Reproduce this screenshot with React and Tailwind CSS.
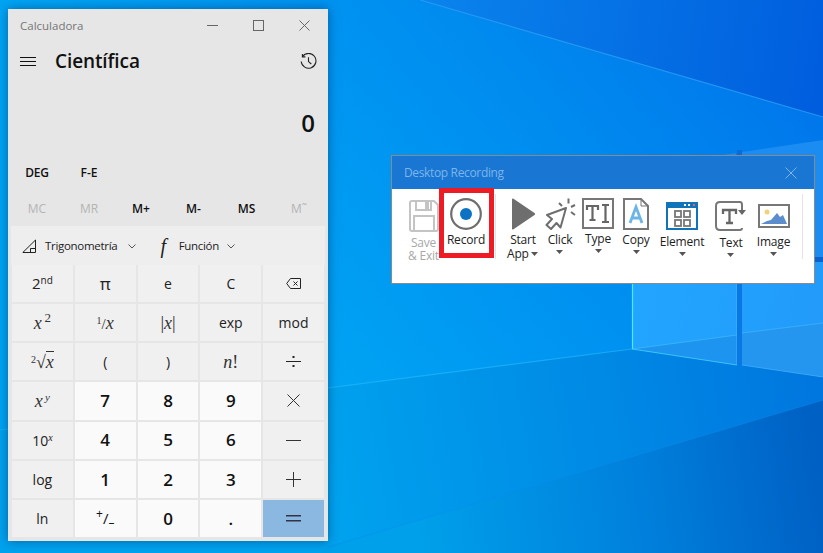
const sans = { fontFamily: '"Open Sans","Noto Sans",sans-serif' };

function Wallpaper() {
  return (
    <svg className="absolute inset-0" width="823" height="553" viewBox="0 0 823 553">
      <defs>
        <linearGradient id="wall" gradientUnits="userSpaceOnUse" x1="330" y1="400" x2="823" y2="0">
          <stop offset="0" stopColor="#00a4f4" />
          <stop offset="0.45" stopColor="#0090f0" />
          <stop offset="1" stopColor="#0070ea" />
        </linearGradient>
        <linearGradient id="top" gradientUnits="userSpaceOnUse" x1="420" y1="0" x2="823" y2="60">
          <stop offset="0" stopColor="#0a84ec" />
          <stop offset="1" stopColor="#005ede" />
        </linearGradient>
        <linearGradient id="floor" gradientUnits="userSpaceOnUse" x1="328" y1="470" x2="823" y2="380">
          <stop offset="0" stopColor="#00a2ee" />
          <stop offset="1" stopColor="#0076de" />
        </linearGradient>
        <linearGradient id="wedge" gradientUnits="userSpaceOnUse" x1="420" y1="553" x2="823" y2="500">
          <stop offset="0" stopColor="#00a0ea" />
          <stop offset="0.55" stopColor="#0080dc" />
          <stop offset="1" stopColor="#0060c4" />
        </linearGradient>
        <linearGradient id="pane" gradientUnits="userSpaceOnUse" x1="632" y1="284" x2="823" y2="340">
          <stop offset="0" stopColor="#22a6ff" />
          <stop offset="1" stopColor="#229afa" />
        </linearGradient>
      </defs>
      <rect width="823" height="553" fill="url(#wall)" />
      <polygon points="420,0 823,117 823,0" fill="url(#top)" />
      <polygon points="0,430 632,349 823,377 823,553 0,553" fill="url(#floor)" />
      <polygon points="320,553 328,547 823,400 823,553" fill="url(#wedge)" />
      <line x1="328" y1="547" x2="823" y2="400" stroke="#0a8cf0" strokeWidth="1" opacity="0.5" />
      <line x1="420" y1="0" x2="823" y2="117" stroke="#2c9ef6" strokeWidth="1.2" opacity="0.8" />
      <line x1="0" y1="430" x2="632" y2="349" stroke="#22b6fc" strokeWidth="1.2" opacity="0.7" />
      <polygon points="632,284 737,284 737,335 632,349" fill="url(#pane)" />
      <polygon points="632,349 737,335 737,365" fill="#1c94f0" />
      <polygon points="742,284 823,284 823,323 742,333" fill="url(#pane)" />
      <polygon points="742,333 823,323 823,377 742,365" fill="#2496f0" />
      <polygon points="723,155 736,153 736,155" fill="#1c8cf0" />
      <rect x="737" y="150" width="5" height="5" fill="#0a6cdc" />
      <polygon points="742,152 823,140 823,257 742,257" fill="#1a8cf2" />
      <rect x="815" y="257" width="8" height="5" fill="#0a62cc" />
      <rect x="815" y="262" width="8" height="22" fill="#229cfa" />
      <rect x="737" y="284" width="5" height="81" fill="#0a78e4" />
      <line x1="632.5" y1="284" x2="632.5" y2="349" stroke="#52e8ff" strokeWidth="1.2" />
      <line x1="632" y1="349" x2="737" y2="365" stroke="#45d4ff" strokeWidth="1" opacity="0.8" />
      <line x1="632" y1="349" x2="737" y2="335" stroke="#50ccff" strokeWidth="1" opacity="0.55" />
      <line x1="736.5" y1="284" x2="736.5" y2="365" stroke="#50c4ff" strokeWidth="1" opacity="0.35" />
      <line x1="742" y1="365" x2="823" y2="377" stroke="#45b4ff" strokeWidth="1" opacity="0.7" />
      <line x1="742" y1="333" x2="823" y2="323" stroke="#50c4ff" strokeWidth="1" opacity="0.55" />
    </svg>
  );
}

function Sup({ children }) {
  return <sup className="text-[10px] leading-none">{children}</sup>;
}

const mathStyle = { fontFamily: '"Liberation Serif",serif' };

function Math({ children }) {
  return <span className="italic text-[18px] leading-none text-[#333]" style={mathStyle}>{children}</span>;
}

const fn = "text-[14px]";
const num = "text-[17px] font-semibold";

const keys = [
  [<span className="text-[15px]">2<Sup>nd</Sup></span>, "f"],
  [<span className="text-[17px]">π</span>, "f"],
  [<span className={fn}>e</span>, "f"],
  [<span className={fn}>C</span>, "f"],
  [<svg width="15" height="11" viewBox="0 0 15 11" fill="none" stroke="#222" strokeWidth="1"><path d="M4.500.5H14.500V10.500H4.500L.7 5.500Z" /><path d="M7.500 3.500l4 4M11.500 3.500l-4 4" /></svg>, "f"],
  [<Math>x<sup className="not-italic text-[13px] leading-none">&thinsp;2</sup></Math>, "f"],
  [<Math><sup className="not-italic text-[10px] leading-none">1</sup><span className="not-italic text-[15px]">/</span>x</Math>, "f"],
  [<Math><span className="not-italic">|</span>x<span className="not-italic">|</span></Math>, "f"],
  [<span className={fn}>exp</span>, "f"],
  [<span className={fn}>mod</span>, "f"],
  [<Math><sup className="text-[10px] not-italic leading-none">2</sup><span className="not-italic">√</span><span className="border-t border-[#333]">x</span></Math>, "f"],
  [<span className={fn}>(</span>, "f"],
  [<span className={fn}>)</span>, "f"],
  [<Math>n<span className="not-italic">!</span></Math>, "f"],
  [<svg width="15" height="15" viewBox="0 0 15 15" fill="#222"><rect y="7" width="15" height="1" /><rect x="6.500" y="2" width="2" height="2" /><rect x="6.500" y="11" width="2" height="2" /></svg>, "f"],
  [<Math>x<sup className="text-[11px] leading-none">&thinsp;y</sup></Math>, "f"],
  [<span className={num}>7</span>, "n"],
  [<span className={num}>8</span>, "n"],
  [<span className={num}>9</span>, "n"],
  [<svg width="13" height="13" viewBox="0 0 13 13" stroke="#333" strokeWidth="1"><path d="M.5.5l12 12M12.500.5l-12 12" /></svg>, "f"],
  [<span className="text-[14px]">10<sup className="italic text-[10px] leading-none" style={mathStyle}>x</sup></span>, "f"],
  [<span className={num}>4</span>, "n"],
  [<span className={num}>5</span>, "n"],
  [<span className={num}>6</span>, "n"],
  [<svg width="15" height="3" viewBox="0 0 15 3" fill="#333"><rect y="1" width="15" height="1" /></svg>, "f"],
  [<span className={fn}>log</span>, "f"],
  [<span className={num}>1</span>, "n"],
  [<span className={num}>2</span>, "n"],
  [<span className={num}>3</span>, "n"],
  [<svg width="15" height="15" viewBox="0 0 15 15" fill="#333"><rect y="7" width="15" height="1" /><rect x="7" width="1" height="15" /></svg>, "f"],
  [<span className={fn}>ln</span>, "f"],
  [<span className="text-[15px]"><sup className="text-[12px] leading-none">+</sup>/<sub className="text-[12px] leading-none">–</sub></span>, "n"],
  [<span className={num}>0</span>, "n"],
  [<span className={num}>.</span>, "n"],
  [<svg width="15" height="9" viewBox="0 0 15 9" fill="#334"><rect y="1" width="15" height="1.500" /><rect y="6" width="15" height="1.500" /></svg>, "e"],
];

function Calculator() {
  return (
    <div className="absolute left-[8px] top-[9px] w-[320px] h-[532px] bg-[#e6e6e6] flex flex-col text-[#111] shadow-[0_0_10px_rgba(0,40,90,0.5)]" style={sans}>
      <div className="h-[33px] flex items-center pl-[12px] relative shrink-0">
        <span className="text-[11.5px] text-[#767676]">Calculadora</span>
        <div className="ml-auto flex items-center pr-[18px] gap-[35px]">
          <svg width="11" height="11" viewBox="0 0 11 11" stroke="#666"><path d="M0 5.500h11" /></svg>
          <svg width="11" height="11" viewBox="0 0 11 11" fill="none" stroke="#666"><rect x=".5" y=".5" width="10" height="10" /></svg>
          <svg width="11" height="11" viewBox="0 0 11 11" stroke="#666"><path d="M.5.5l10 10M10.500.5l-10 10" /></svg>
        </div>
      </div>
      <div className="h-[38px] flex items-center pl-[12px] pr-[11px] shrink-0">
        <svg width="16" height="9" viewBox="0 0 16 9" stroke="#111"><path d="M0 .5h16M0 4.500h16M0 8.500h16" /></svg>
        <span className="ml-[19px] text-[19px] font-semibold tracking-[-0.1px]">Científica</span>
        <svg className="ml-auto" width="17" height="17" viewBox="0 0 17 17" fill="none" stroke="#222" strokeWidth="1.100">
          <path d="M2.600 3.400A7.400 7.400 0 1 1 1.200 8.500" />
          <path d="M2.400.9v3h3" />
          <path d="M8.500 4.200v4.400l2.800 2.400" />
        </svg>
      </div>
      <div className="h-[75px] shrink-0 flex items-end justify-end pr-[13px] pb-[16px]">
        <span className="text-[24px] font-semibold leading-[32px]">0</span>
      </div>
      <div className="h-[36px] shrink-0 flex items-center text-[12px] font-semibold">
        <span className="w-[58px] text-center tracking-[-0.2px]">DEG</span>
        <span className="w-[46px] text-center">F-E</span>
      </div>
      <div className="h-[35px] shrink-0 flex items-center text-[12px] font-semibold pl-[3px]">
        <span className="w-[52px] text-center text-[#b4b4b4] font-normal">MC</span>
        <span className="w-[52px] text-center text-[#b4b4b4] font-normal">MR</span>
        <span className="w-[52px] text-center">M+</span>
        <span className="w-[53px] text-center">M-</span>
        <span className="w-[53px] text-center">MS</span>
        <span className="w-[52px] text-center text-[#b4b4b4] font-normal">M˜</span>
      </div>
      <div className="mx-[3px] h-[39px] shrink-0 bg-[#eeeeee] flex items-center text-[11.5px] tracking-[-0.3px] text-[#222] pl-[11px]">
        <svg width="14" height="14" viewBox="0 0 14 14" fill="none" stroke="#222"><path d="M.8 13.500h12.700V1Z" /><path d="M8.500 13.500V9.500h5" /></svg>
        <span className="ml-[9px]">Trigonometría</span>
        <svg className="ml-[11px] mt-[2px]" width="8" height="5" viewBox="0 0 8 5" fill="none" stroke="#555"><path d="M.5.5l3.500 3.500L7.500.5" /></svg>
        <span className="ml-[24px] text-[20px] italic leading-none" style={mathStyle}>f</span>
        <span className="ml-[13px]">Función</span>
        <svg className="ml-[8px] mt-[2px]" width="8" height="5" viewBox="0 0 8 5" fill="none" stroke="#555"><path d="M.5.5l3.500 3.500L7.500.5" /></svg>
      </div>
      <div className="mx-[4px] mb-[4px] grid grid-cols-5 grid-rows-7 gap-[2px] flex-1">
        {keys.map(([label, kind], i) => (
          <div
            key={i}
            className={
              kind === "n"
                ? "bg-[#fafafa] flex items-center justify-center text-[#111]"
                : kind === "e"
                ? "bg-[#8ab8e0] flex items-center justify-center"
                : "bg-[#f0f0f0] flex items-center justify-center text-[#222]"
            }
          >
            {label}
          </div>
        ))}
      </div>
    </div>
  );
}

function Caret({ className = "" }) {
  return (
    <svg className={className} width="7" height="4" viewBox="0 0 7 4" fill="#555"><path d="M0 0h7L3.500 4Z" /></svg>
  );
}

function Tool({ width, iconTop, labelTop, lines, caret = true, muted, children }) {
  return (
    <div className={`flex flex-col items-center shrink-0 ${width}`}>
      <div className={`flex justify-center ${iconTop}`}>{children}</div>
      <div className={`flex flex-col items-center text-[12px] tracking-[-0.2px] leading-[13px] ${labelTop} ${muted ? "text-[#a8a8a8]" : "text-[#222]"}`}>
        {lines.map((l) => <span key={l} className="whitespace-nowrap">{l}</span>)}
        {caret && <Caret className="mt-[4px]" />}
      </div>
    </div>
  );
}

function Dialog() {
  return (
    <div className="absolute left-[391px] top-[155px] w-[424px] h-[129px] border border-[#8a8a8a] bg-white flex flex-col" style={sans}>
      <div className="h-[33px] shrink-0 bg-[#1976d2] flex items-center pl-[12px] pr-[17px] text-[12px] tracking-[-0.35px] text-[#7db5ea]">
        <span>Desktop Recording</span>
        <svg className="ml-auto" width="12" height="12" viewBox="0 0 12 12" stroke="#7db5ea"><path d="M.5.5l11 11M11.500.5l-11 11" /></svg>
      </div>
      <div className="flex items-start pl-[11px] flex-1">
        <Tool width="w-[41px]" iconTop="mt-[11px]" labelTop="mt-[4px]" lines={["Save", "& Exit"]} caret={false} muted>
          <svg width="30" height="32" viewBox="0 0 30 32" fill="none" stroke="#c4c4c4" strokeWidth="2"><path d="M3 1h22l4 4v24a2 2 0 0 1-2 2H3a2 2 0 0 1-2-2V3a2 2 0 0 1 2-2Z" /><path d="M7 1v9h15V1" /><rect x="16" y="2" width="4" height="7" fill="#c4c4c4" stroke="none" /><path d="M5 31V16h20v15" /></svg>
        </Tool>
        <Tool width="w-[44px]" iconTop="mt-[9px]" labelTop="mt-[3px]" lines={["Record"]} caret={false}>
          <svg width="32" height="32" viewBox="0 0 32 32" fill="none"><circle cx="16" cy="16" r="14.800" stroke="#6e6e6e" strokeWidth="2.200" /><circle cx="16" cy="16" r="6" fill="#0b72c4" /></svg>
        </Tool>
        <div className="w-px h-[65px] bg-[#e4e4e4] mt-[5px] ml-[7px] mr-[9px]" />
        <Tool width="w-[36px]" iconTop="mt-[9px]" labelTop="mt-[3px]" lines={["Start"]} caret={false}>
          <svg width="24" height="32" viewBox="0 0 24 32" fill="#6e6e6e"><path d="M1 1.500q0-1.500 1.500-.7L23.500 15a1.200 1.200 0 0 1 0 2L2.500 31.200q-1.500.8-1.500-.7Z" /></svg>
        </Tool>
        <Tool width="w-[38px]" iconTop="mt-[9px]" labelTop="mt-[3px]" lines={["Click"]}>
          <svg width="31" height="32" viewBox="0 0 31 32" fill="none" stroke="#6e6e6e" strokeWidth="2" strokeLinejoin="round"><path d="M21 10 2 17l5 4-5.500 6 4.500 4 5.500-6 4 4.500Z" /><path d="M14 5l3 3M23.500.5v5M30 7l-4 2M30 17l-4-3" /></svg>
        </Tool>
        <Tool width="w-[38px]" iconTop="mt-[9px]" labelTop="mt-[3px]" lines={["Type"]}>
          <svg width="32" height="31" viewBox="0 0 32 31" fill="none"><rect x="1" y="1" width="30" height="29" stroke="#777" strokeWidth="2" /><path d="M5 12V8h11v4M10.500 8v14M7.500 22h6" stroke="#666" strokeWidth="2.200" /><path d="M20 7h7M23.500 7v17M20 24h7" stroke="#666" strokeWidth="2.200" /></svg>
        </Tool>
        <Tool width="w-[38px]" iconTop="mt-[9px]" labelTop="mt-[3px]" lines={["Copy"]}>
          <svg width="26" height="32" viewBox="0 0 26 32" fill="none"><path d="M1 1h17l7 7v23H1Z" stroke="#777" strokeWidth="2" /><path d="M18 1v7h7" stroke="#777" strokeWidth="1" /><path d="M7 25 13 9l6 16M9 20h8" stroke="#6db5e6" strokeWidth="2.800" /></svg>
        </Tool>
        <Tool width="w-[54px]" iconTop="mt-[13px]" labelTop="mt-[5px]" lines={["Element"]}>
          <svg width="32" height="28" viewBox="0 0 32 28"><rect width="32" height="28" fill="#0f75b8" /><rect x="2" y="6" width="28" height="20" fill="#fff" /><rect x="18" y="2" width="2" height="2" fill="#fff" /><rect x="22" y="2" width="2" height="2" fill="#fff" /><rect x="27" y="2" width="2" height="2" fill="#e2607a" /><g fill="none" stroke="#777" strokeWidth="1.800"><rect x="9" y="9" width="6" height="6" /><rect x="18" y="9" width="6" height="6" /><rect x="9" y="18" width="6" height="6" /><rect x="18" y="18" width="6" height="6" /></g></svg>
        </Tool>
        <Tool width="w-[44px]" iconTop="mt-[12px]" labelTop="mt-[5px]" lines={["Text"]}>
          <svg width="32" height="30" viewBox="0 0 32 30" fill="none"><path d="M25 1H5Q1 1 1 5v20q0 4 4 4h20q2 0 2-2" stroke="#777" strokeWidth="2" /><path d="M8 13V9h13v4M14.500 9v13M11 22h7" stroke="#666" strokeWidth="2.300" /><path d="M25 1q2 0 2 3v6" stroke="#777" strokeWidth="2" /><path d="M23 9h8l-4 5Z" fill="#666" /></svg>
        </Tool>
        <Tool width="w-[41px]" iconTop="mt-[15px]" labelTop="mt-[7px]" lines={["Image"]}>
          <svg width="32" height="24" viewBox="0 0 32 24"><rect x="1" y="1" width="30" height="22" fill="#fff" stroke="#777" strokeWidth="2" /><circle cx="9" cy="8" r="2.500" fill="#f0d27a" /><path d="M3 20l6-3 4-1 6-7 3 4 3-2 4 9Z" fill="#5b8ccc" /></svg>
        </Tool>
        <div className="w-px h-[65px] bg-[#e4e4e4] mt-[5px] ml-[8px]" />
      </div>
      <div className="absolute left-[115px] top-[91px] flex items-center gap-[2px] text-[12px] tracking-[-0.2px] leading-[13px] text-[#222]">
        <span>App</span>
        <Caret />
      </div>
      <div className="absolute left-[47px] top-[32px] w-[55px] h-[70px] border-[5px] border-[#ed1c24]" />
    </div>
  );
}

export default function App() {
  return (
    <div className="relative w-[823px] h-[553px] overflow-hidden">
      <Wallpaper />
      <Calculator />
      <Dialog />
    </div>
  );
}
